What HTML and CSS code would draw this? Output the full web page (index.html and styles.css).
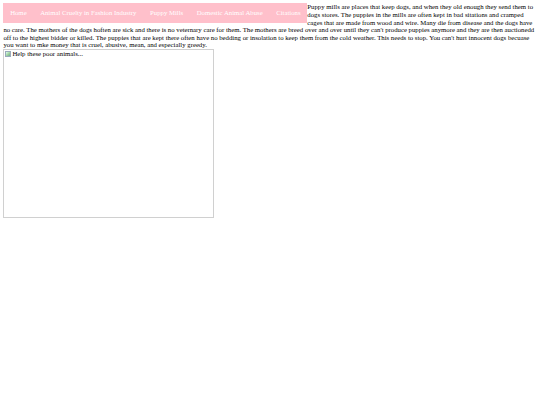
FILE: index.html
```
<!DOCTYPE html>
<html>
<head>
<meta charset="utf-8">
<title>Puppy Mills</title>
<link rel="stylesheet" href="styles.css">
</head>
<body>
<ul class="nav">
<li><a href="#">Home</a></li>
<li><a href="#">Animal Cruelty in Fashion Industry</a></li>
<li><a href="#">Puppy Mills</a></li>
<li><a href="#">Domestic Animal Abuse</a></li>
<li><a href="#">Citations</a></li>
</ul>
<div class="text">Puppy mills are places that keep dogs, and when they old enough they send them to dogs stores. The puppies in the mills are often kept in bad sitations and cramped cages that are made from wood and wire. Many die from disease and the dogs have no care. The mothers of the dogs hoften are sick and there is no veternary care for them. The mothers are breed over and over until they can't produce puppies anymore and they are then auctionedd off to the highest bidder or killed. The puppies that are kept there often have no bedding or insolation to keep them from the cold weather. This needs to stop. You can't hurt innocent dogs becuase you want to mke money that is cruel, abusive, mean, and especially greedy.</div>
<div class="pic"><span class="alt"><span class="broken"></span>Help these poor animals...</span></div>
</body>
</html>
```
FILE: styles.css
```
body {
  margin: 3.375px;
  font-family: "Liberation Serif", "Times New Roman", serif;
  font-size: 6.75px;
  line-height: 7.6px;
  color: #000;
  background: #fff;
}
.nav {
  float: left;
  list-style: none;
  margin: 0;
  padding: 0;
  background: #ffc0cb;
  display: flex;
}
.nav a {
  display: block;
  padding: 5.9px 6.75px;
  color: #fff;
  text-decoration: none;
}
.text {
  margin: 0;
}
.pic {
  width: 211px;
  height: 169px;
  box-sizing: border-box;
  border: 1px solid #d0d0d0;
}
.alt {
  display: inline-flex;
  align-items: center;
}
.broken {
  display: inline-block;
  width: 6px;
  height: 6px;
  margin: 0 1px 0 1px;
  border: 1px solid #9ab;
  box-sizing: border-box;
  background: linear-gradient(135deg, #dfe 0%, #9c9 60%, #6a9 100%);
}
```
